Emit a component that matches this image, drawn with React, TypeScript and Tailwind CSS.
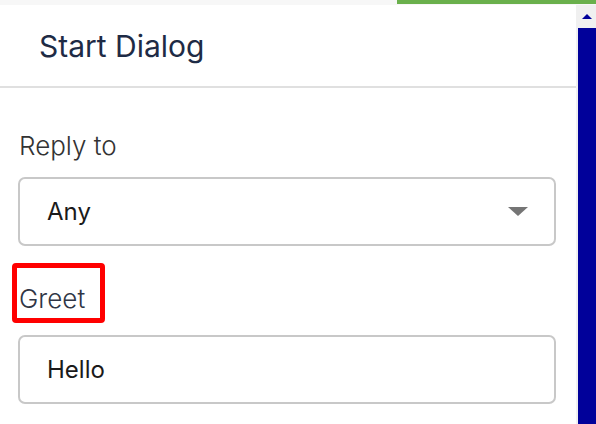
import React from "react";

export default function App() {
  return (
    <div
      className="w-[596px] h-[424px] overflow-hidden bg-white flex flex-col"
      style={{ fontFamily: "Inter, 'Noto Sans', sans-serif" }}
    >
      <div className="h-[5px] bg-[#f7f7f7] flex shrink-0">
        <div className="ml-auto w-[199px] h-[4px] bg-[#6ab04c]" />
      </div>
      <div className="flex flex-1 min-h-0">
        <div className="flex-1 flex flex-col">
          <div className="h-[83px] shrink-0 flex items-center pl-[39px] border-b-2 border-[#e0e0e0]">
            <span className="text-[30px] leading-[36px] text-[#1e2b45]">Start Dialog</span>
          </div>
          <div className="px-[18px] pr-[20px] pt-[42px] flex flex-col">
            <div className="text-[26px] leading-[32px] font-light text-[#333333] pl-[1px]">Reply to</div>
            <div className="mt-[15px] h-[69px] border-2 border-[#c8c8c8] rounded-[7px] flex items-center justify-between pl-[27px] pr-[26px]">
              <span className="text-[24px] leading-[24px] text-[#1a1a1a]">Any</span>
              <svg width="20" height="9" viewBox="0 0 20 9">
                <polygon points="0,0 20,0 10,9" fill="#757575" />
              </svg>
            </div>
            <div className="relative mt-[37px] text-[26px] leading-[32px] font-light text-[#2f3545] pl-[1px]">
              <span>Greet</span>
              <div className="absolute left-[-6px] top-[-20px] w-[93px] h-[60px] border-[5px] border-[#ff0000] rounded-[4px]" />
            </div>
            <div className="mt-[20px] h-[69px] border-2 border-[#c8c8c8] rounded-[7px] flex items-center pl-[27px]">
              <span className="text-[24px] leading-[24px] text-[#1a1a1a]">Hello</span>
            </div>
          </div>
        </div>
        <div className="w-[20px] bg-[#f0f0f0] flex flex-col">
          <div className="h-[23px] flex items-center justify-center pl-[2px]">
            <svg width="10" height="5" viewBox="0 0 10 5">
              <polygon points="0,5 10,5 5,0" fill="#00009a" />
            </svg>
          </div>
          <div className="flex-1 ml-[2px] bg-[#01019a]" />
        </div>
      </div>
    </div>
  );
}
